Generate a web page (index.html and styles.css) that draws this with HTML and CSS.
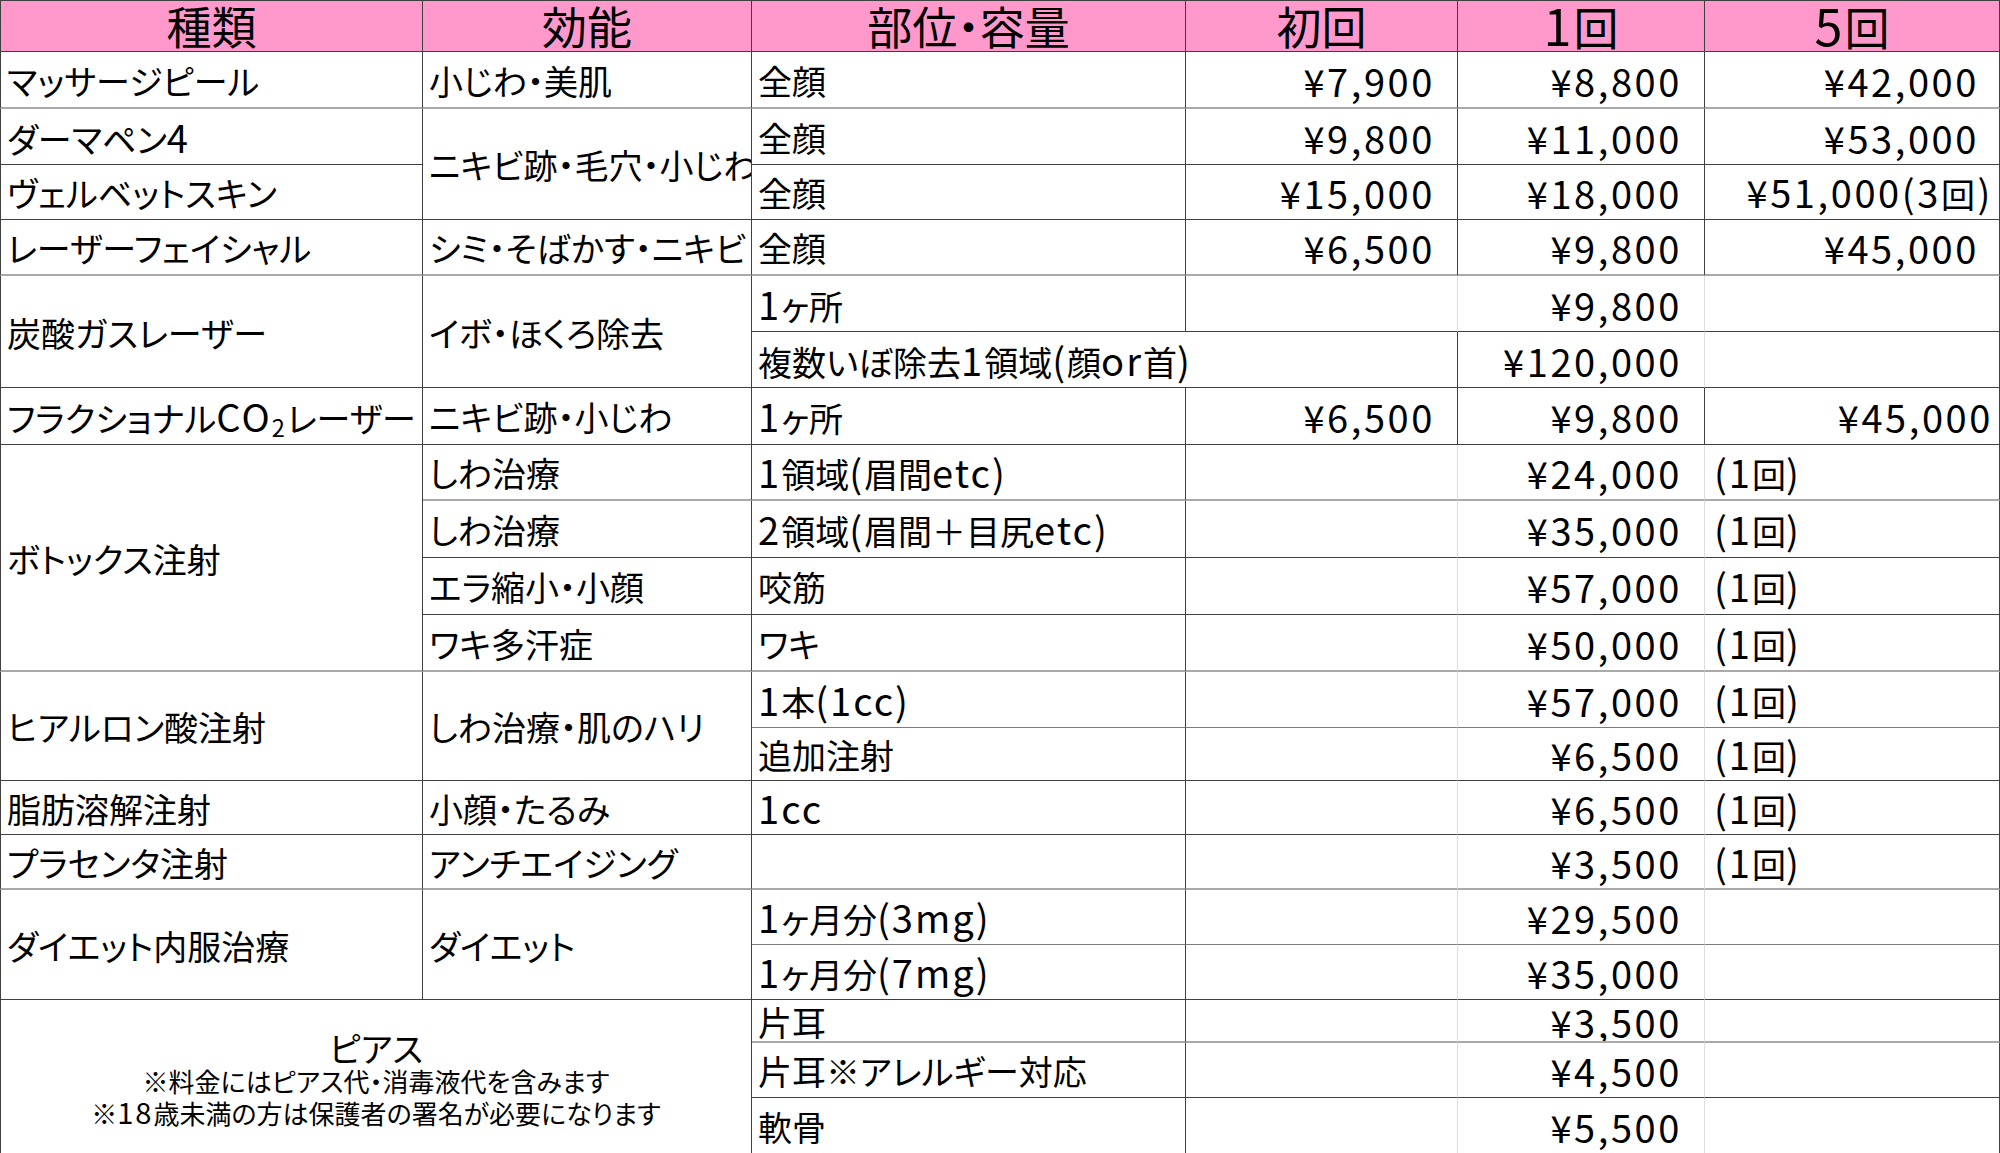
FILE: index.html
```html
<!DOCTYPE html>
<html lang="ja">
<head>
<meta charset="utf-8">
<title>料金表</title>
<link rel="stylesheet" href="styles.css">
</head>
<body>
<table class="price">
<colgroup>
<col class="w1"><col class="w2"><col class="w3"><col class="w4"><col class="w5"><col class="w6">
</colgroup>
<thead>
<tr class="rh">
<th class="first">種類</th><th>効能</th><th>部位・容量</th><th>初回</th><th><span class="n">1</span>回</th><th><span class="n">5</span>回</th>
</tr>
</thead>
<tbody>
<tr class="r57">
<td class="first bg">マッサージピール</td><td class="bg">小じわ・美肌</td><td class="bg">全顔</td><td class="p bg">¥7,900</td><td class="p bg">¥8,800</td><td class="p p6 bg">¥42,000</td>
</tr>
<tr class="r56">
<td class="first">ダーマペン<span class="n">4</span></td><td rowspan="2">ニキビ跡・毛穴・小じわ</td><td>全顔</td><td class="p">¥9,800</td><td class="p">¥11,000</td><td class="p p6">¥53,000</td>
</tr>
<tr class="r55">
<td class="first">ヴェルベットスキン</td><td>全顔</td><td class="p">¥15,000</td><td class="p">¥18,000</td><td class="p p7">¥51,000(3<span class="j">回</span>)</td>
</tr>
<tr class="r56">
<td class="first bg">レーザーフェイシャル</td><td class="bg">シミ・そばかす・ニキビ</td><td class="bg">全顔</td><td class="p bg">¥6,500</td><td class="p bg">¥9,800</td><td class="p p6 bg">¥45,000</td>
</tr>
<tr class="r56">
<td class="first" rowspan="2">炭酸ガスレーザー</td><td rowspan="2">イボ・ほくろ除去</td><td><span class="n">1</span>ヶ所</td><td class="rl"></td><td class="p rl">¥9,800</td><td></td>
</tr>
<tr class="r56">
<td colspan="2">複数いぼ除去<span class="n">1</span>領域<span class="n">(</span>顔<span class="n">or</span>首<span class="n">)</span></td><td class="p rl">¥120,000</td><td></td>
</tr>
<tr class="r57">
<td class="first">フラクショナル<span class="n">CO<sub>2</sub></span>レーザー</td><td>ニキビ跡・小じわ</td><td><span class="n">1</span>ヶ所</td><td class="p">¥6,500</td><td class="p">¥9,800</td><td class="p p7">¥45,000</td>
</tr>
<tr class="r56">
<td class="first bg" rowspan="4">ボトックス注射</td><td class="bg">しわ治療</td><td class="bg"><span class="n">1</span>領域<span class="n">(</span>眉間<span class="n">etc)</span></td><td class="rl bg"></td><td class="p rl bg">¥24,000</td><td class="t bg"><span class="n">(1</span>回<span class="n">)</span></td>
</tr>
<tr class="r57">
<td>しわ治療</td><td><span class="n">2</span>領域<span class="n">(</span>眉間＋目尻<span class="n">etc)</span></td><td class="rl"></td><td class="p rl">¥35,000</td><td class="t"><span class="n">(1</span>回<span class="n">)</span></td>
</tr>
<tr class="r57">
<td>エラ縮小・小顔</td><td>咬筋</td><td class="rl"></td><td class="p rl">¥57,000</td><td class="t"><span class="n">(1</span>回<span class="n">)</span></td>
</tr>
<tr class="r57">
<td class="bg">ワキ多汗症</td><td class="bg">ワキ</td><td class="rl bg"></td><td class="p rl bg">¥50,000</td><td class="t bg"><span class="n">(1</span>回<span class="n">)</span></td>
</tr>
<tr class="r56">
<td class="first" rowspan="2">ヒアルロン酸注射</td><td rowspan="2">しわ治療・肌のハリ</td><td class="bm"><span class="n">1</span>本<span class="n">(1cc)</span></td><td class="rl bm"></td><td class="p rl bm">¥57,000</td><td class="t bm"><span class="n">(1</span>回<span class="n">)</span></td>
</tr>
<tr class="r53">
<td>追加注射</td><td class="rl"></td><td class="p rl">¥6,500</td><td class="t"><span class="n">(1</span>回<span class="n">)</span></td>
</tr>
<tr class="r54">
<td class="first">脂肪溶解注射</td><td>小顔・たるみ</td><td><span class="n">1cc</span></td><td class="rl"></td><td class="p rl">¥6,500</td><td class="t"><span class="n">(1</span>回<span class="n">)</span></td>
</tr>
<tr class="r55">
<td class="first bg">プラセンタ注射</td><td class="bg">アンチエイジング</td><td class="bg"></td><td class="rl bg"></td><td class="p rl bg">¥3,500</td><td class="t bg"><span class="n">(1</span>回<span class="n">)</span></td>
</tr>
<tr class="r55">
<td class="first" rowspan="2">ダイエット内服治療</td><td rowspan="2">ダイエット</td><td class="bm"><span class="n">1</span>ヶ月分<span class="n">(3mg)</span></td><td class="rl bm"></td><td class="p rl bm">¥29,500</td><td class="bm"></td>
</tr>
<tr class="r55">
<td><span class="n">1</span>ヶ月分<span class="n">(7mg)</span></td><td class="rl"></td><td class="p rl">¥35,000</td><td></td>
</tr>
<tr class="r43">
<td class="first pierce" colspan="2" rowspan="3">
<div class="pierce-title">ピアス</div>
<div class="pierce-note">※料金にはピアス代・消毒液代を含みます</div>
<div class="pierce-note">※<span class="n">18</span>歳未満の方は保護者の署名が必要になります</div>
</td>
<td class="bg">片耳</td><td class="rl bg"></td><td class="p rl bg">¥3,500</td><td class="bg"></td>
</tr>
<tr class="r55">
<td>片耳※アレルギー対応</td><td class="rl"></td><td class="p rl">¥4,500</td><td></td>
</tr>
<tr class="r56">
<td>軟骨</td><td class="rl"></td><td class="p rl">¥5,500</td><td></td>
</tr>
</tbody>
</table>
</body>
</html>
```

FILE: styles.css
```css
* {
  box-sizing: border-box;
}

html,
body {
  margin: 0;
  padding: 0;
  background: #ffffff;
}

body {
  width: 2000px;
  height: 1153px;
  overflow: hidden;
  font-family: "Noto Sans CJK JP", sans-serif;
  color: #000000;
}

.price {
  width: 2000px;
  table-layout: fixed;
  border-collapse: separate;
  border-spacing: 0;
}

.w1 { width: 423px; }
.w2 { width: 329px; }
.w3 { width: 434px; }
.w4 { width: 272px; }
.w5 { width: 247px; }
.w6 { width: 295px; }

.rh { height: 51px; }
.r57 { height: 57px; }
.r56 { height: 56px; }
.r55 { height: 55px; }
.r54 { height: 54px; }
.r53 { height: 53px; }
.r43 { height: 43px; }

.price th,
.price td {
  border-right: 1px solid #404040;
  border-bottom: 1px solid #404040;
  padding: 2px 0 0 6px;
  white-space: nowrap;
  overflow: hidden;
  vertical-align: middle;
  text-align: left;
  font-weight: 400;
  font-size: 34px;
  line-height: 36px;
  font-feature-settings: "palt";
}

.price th {
  background: #ff99cc;
  border-top: 1px solid #404040;
  font-size: 45px;
  line-height: 48px;
  text-align: center;
  padding: 0;
  overflow: visible;
}

.price .first {
  border-left: 1px solid #404040;
}

.price .bg {
  border-bottom: 2px solid #a9a9a9;
}

.price .bm {
  border-bottom: 1px solid #7c7c7c;
}

.price .rl {
  border-right: 1px solid #dddddd;
}

.n {
  font-size: 1.12em;
  letter-spacing: 2px;
}

.n sub {
  font-size: 0.62em;
  vertical-align: -0.2em;
  line-height: 0;
}

.price .p {
  text-align: right;
  font-size: 38px;
  letter-spacing: 2.6px;
  padding-left: 0;
  padding-right: 22px;
}

.price .p6 {
  padding-right: 20px;
}

.price .p7 {
  padding-right: 6px;
}

.j {
  font-size: 0.895em;
}

.price .t {
  padding-left: 9px;
}

.price .pierce {
  text-align: center;
  padding: 4px 0 0 0;
}

.pierce-title {
  font-size: 34px;
  line-height: 36px;
}

.pierce-note {
  font-size: 26px;
  line-height: 30px;
}
```
